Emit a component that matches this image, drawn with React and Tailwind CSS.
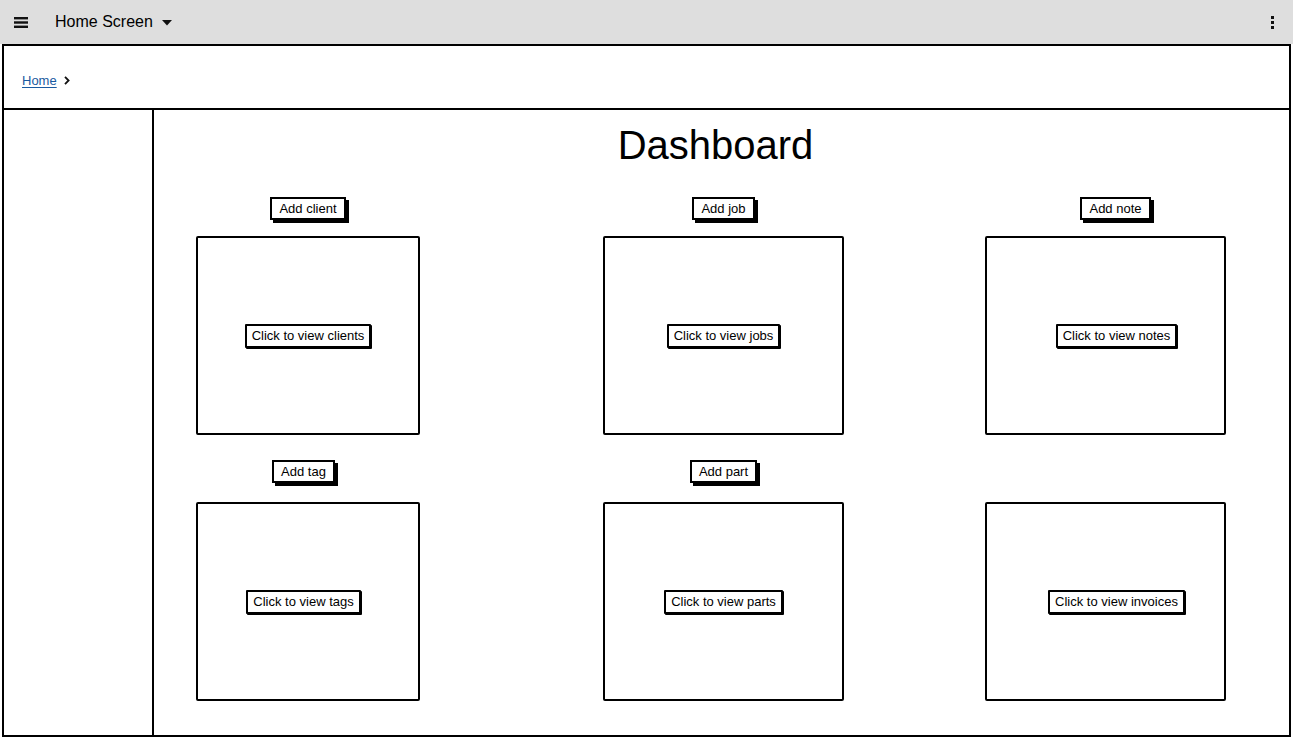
import React from 'react';

const font = { fontFamily: '"Liberation Sans", Arial, sans-serif' };

function AddButton({ label, className = '' }) {
    return (
        <div
            className={`h-[23px] px-[7px] flex items-center bg-white border-2 border-black text-[13px] leading-none text-black shadow-[3px_3px_0_0_#000] ${className}`}
        >
            {label}
        </div>
    );
}

function ViewButton({ label, className = '' }) {
    return (
        <div className={`h-[24px] px-[5px] flex items-center bg-white border-2 border-black rounded-[1px] text-[13px] leading-none text-black shadow-[1px_1px_0_0_#000] ${className}`}>
            {label}
        </div>
    );
}

function Tile({ add, addClass, view, viewClass, width, gap }) {
    return (
        <div className="flex flex-col items-center" style={{ width }}>
            {add ? <AddButton label={add} className={addClass} /> : <div className="h-[23px]" />}
            <div className={`${gap} w-full h-[199px] border-2 border-black rounded-[2px] flex items-center justify-center`}>
                <ViewButton label={view} className={viewClass} />
            </div>
        </div>
    );
}

const rows = [
    {
        gap: 'mt-[16px]',
        tiles: [
            { add: 'Add client', view: 'Click to view clients', width: 224 },
            { add: 'Add job', view: 'Click to view jobs', width: 241 },
            { add: 'Add note', addClass: 'ml-[20px]', view: 'Click to view notes', viewClass: 'ml-[22px]', width: 241 },
        ],
    },
    {
        gap: 'mt-[19px]',
        tiles: [
            { add: 'Add tag', addClass: 'mr-[9px]', view: 'Click to view tags', viewClass: 'mr-[9px]', width: 224 },
            { add: 'Add part', view: 'Click to view parts', width: 241 },
            { add: null, view: 'Click to view invoices', viewClass: 'ml-[22px]', width: 241 },
        ],
    },
];

export default function App() {
    return (
        <div className="w-[1293px] h-[738px] bg-white overflow-hidden text-black" style={font}>
            {/* top app bar */}
            <header className="h-[44px] bg-[#dedede] flex items-center pl-[14px] pr-[19px]">
                <svg width="14" height="11" viewBox="0 0 14 11" className="mt-[1px]">
                    <rect x="0" y="0" width="14" height="2.4" fill="#111" />
                    <rect x="0" y="4.3" width="14" height="2.4" fill="#111" />
                    <rect x="0" y="8.6" width="14" height="2.4" fill="#111" />
                </svg>
                <span className="ml-[27px] text-[16px]">Home Screen</span>
                <svg width="10" height="6" viewBox="0 0 10 6" className="ml-[9px] mt-[1px]">
                    <path d="M0 0 L10 0 L5 5.5 Z" fill="#111" />
                </svg>
                <div className="ml-auto flex flex-col gap-[2px] mt-[1px]">
                    <span className="w-[3px] h-[3px] bg-[#111]" />
                    <span className="w-[3px] h-[3px] bg-[#111]" />
                    <span className="w-[3px] h-[3px] bg-[#111]" />
                </div>
            </header>

            {/* window frame */}
            <div className="mx-[2px] h-[693px] border-2 border-black flex flex-col">
                <nav className="h-[64px] border-b-2 border-black flex items-center pl-[18px] pt-[7px]">
                    <a className="text-[13px] text-[#1a5aa0] underline underline-offset-2">Home</a>
                    <svg width="6" height="9" viewBox="0 0 6 9" className="ml-[7px]">
                        <path d="M1 0.8 L4.6 4.5 L1 8.2" fill="none" stroke="#111" strokeWidth="1.8" />
                    </svg>
                </nav>

                <div className="flex-1 flex">
                    <aside className="w-[150px] border-r-2 border-black" />
                    <main className="flex-1">
                        <h1 className="pt-[12px] pr-[12px] text-[40px] leading-[46px] text-center">Dashboard</h1>
                        <div className="mt-[29px] pl-[42px] flex flex-col gap-[25px]">
                            {rows.map((row, i) => (
                                <div key={i} className="flex">
                                    <Tile {...row.tiles[0]} gap={row.gap} />
                                    <div className="ml-[183px]">
                                        <Tile {...row.tiles[1]} gap={row.gap} />
                                    </div>
                                    <div className="ml-[141px]">
                                        <Tile {...row.tiles[2]} gap={row.gap} />
                                    </div>
                                </div>
                            ))}
                        </div>
                    </main>
                </div>
            </div>
        </div>
    );
}
